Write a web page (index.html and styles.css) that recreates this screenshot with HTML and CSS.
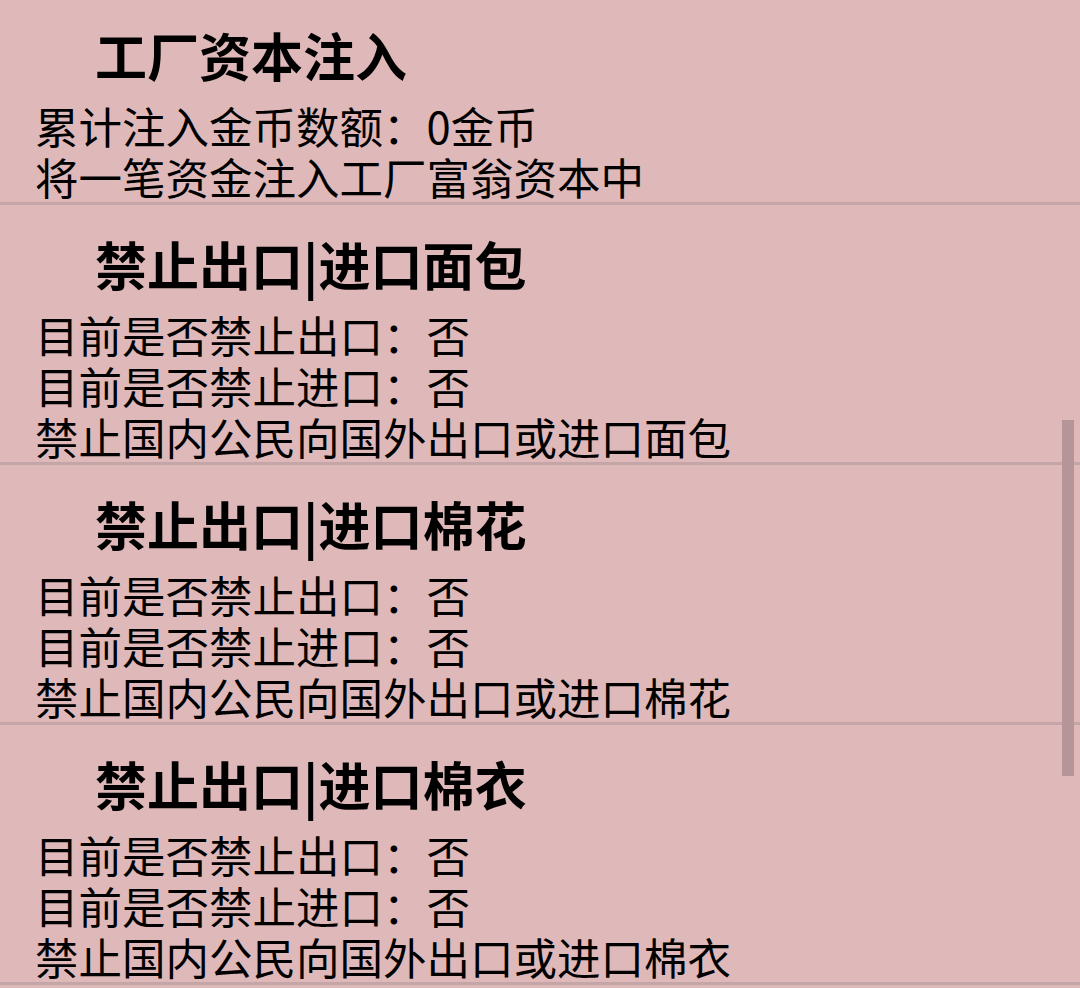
FILE: index.html
```html
<!DOCTYPE html>
<html lang="zh">
<head>
<meta charset="utf-8">
<link rel="stylesheet" href="styles.css">
</head>
<body>
<div class="list">
  <div class="item">
    <div class="title">工厂资本注入</div>
    <div class="body">
      <div class="line">累计注入金币数额：0金币</div>
      <div class="line">将一笔资金注入工厂富翁资本中</div>
    </div>
  </div>
  <div class="item">
    <div class="title">禁止出口|进口面包</div>
    <div class="body">
      <div class="line">目前是否禁止出口：否</div>
      <div class="line">目前是否禁止进口：否</div>
      <div class="line">禁止国内公民向国外出口或进口面包</div>
    </div>
  </div>
  <div class="item">
    <div class="title">禁止出口|进口棉花</div>
    <div class="body">
      <div class="line">目前是否禁止出口：否</div>
      <div class="line">目前是否禁止进口：否</div>
      <div class="line">禁止国内公民向国外出口或进口棉花</div>
    </div>
  </div>
  <div class="item">
    <div class="title">禁止出口|进口棉衣</div>
    <div class="body">
      <div class="line">目前是否禁止出口：否</div>
      <div class="line">目前是否禁止进口：否</div>
      <div class="line">禁止国内公民向国外出口或进口棉衣</div>
    </div>
  </div>
</div>
<div class="scrollbar"></div>
</body>
</html>
```
FILE: styles.css
```css
html, body {
  margin: 0;
  padding: 0;
  background: #dfb8b9;
  height: 988px;
  overflow: hidden;
}
body {
  font-family: "Noto Sans CJK SC", "Noto Sans", sans-serif;
  color: #000;
  position: relative;
}
.list {
  display: flex;
  flex-direction: column;
  margin-top: -4px;
}
.item {
  display: flex;
  flex-direction: column;
  padding-top: 29px;
  border-bottom: 3px solid #c4a6a8;
}
.title {
  font-size: 52px;
  font-weight: 700;
  line-height: 60px;
  height: 60px;
  padding-left: 95px;
  white-space: nowrap;
}
.body {
  margin-top: 15px;
  padding-left: 35px;
}
.line {
  font-size: 43.5px;
  line-height: 51px;
  height: 51px;
  white-space: nowrap;
}
.scrollbar {
  position: absolute;
  right: 6px;
  top: 420px;
  width: 12px;
  height: 356px;
  background: #b59597;
}
```
